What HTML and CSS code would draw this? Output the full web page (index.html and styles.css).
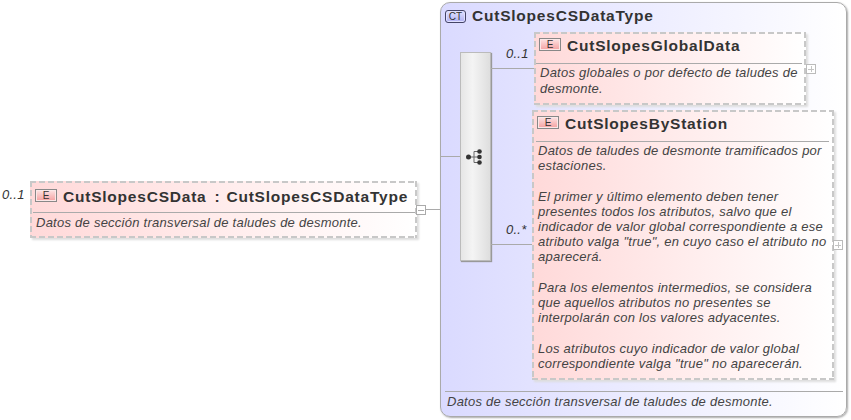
FILE: index.html
```html
<!DOCTYPE html>
<html lang="es">
<head>
<meta charset="utf-8">
<title>CutSlopesCSData</title>
<link rel="stylesheet" href="styles.css">
</head>
<body>
<div class="canvas">
  <span class="occ occ-root">0..1</span>
  <div class="el el-root">
    <div class="head"><span class="badge">E</span><span class="name">CutSlopesCSData<span class="sep">:</span>CutSlopesCSDataType</span></div>
    <p class="doc">Datos de sección transversal de taludes de desmonte.</p>
  </div>
  <span class="toggle toggle-root"></span>
  <div class="wire wire-root"></div>

  <div class="type">
    <div class="type-head"><span class="badge badge-ct">CT</span><span class="name">CutSlopesCSDataType</span></div>
    <p class="doc type-doc">Datos de sección transversal de taludes de desmonte.</p>
  </div>

  <div class="wire wire-in"></div>
  <div class="seq">
    <svg class="seq-icon" width="18" height="18" viewBox="0 0 18 18">
      <path d="M3 9H9M9 3.500V14.500M9 3.500H15M9 9H15M9 14.500H15" fill="none" stroke="#666" stroke-width="1"/>
      <circle cx="3.500" cy="9" r="2.500" fill="#333"/>
      <circle cx="14.500" cy="3.500" r="2.300" fill="#333"/>
      <circle cx="14.500" cy="9" r="2.300" fill="#333"/>
      <circle cx="14.500" cy="14.500" r="2.300" fill="#333"/>
    </svg>
  </div>
  <div class="wire wire-a"></div>
  <div class="wire wire-b"></div>
  <span class="occ occ-a">0..1</span>
  <span class="occ occ-b">0..*</span>

  <div class="el el-a">
    <div class="head"><span class="badge">E</span><span class="name">CutSlopesGlobalData</span></div>
    <p class="doc">Datos globales o por defecto de taludes de desmonte.</p>
  </div>
  <span class="toggle plus toggle-a"></span>

  <div class="el el-b">
    <div class="head"><span class="badge">E</span><span class="name">CutSlopesByStation</span></div>
    <p class="doc">Datos de taludes de desmonte tramificados por estaciones.</p>
    <p class="doc">El primer y último elemento deben tener presentes todos los atributos, salvo que el indicador de valor global correspondiente a ese atributo valga "true", en cuyo caso el atributo no aparecerá.</p>
    <p class="doc">Para los elementos intermedios, se considera que aquellos atributos no presentes se interpolarán con los valores adyacentes.</p>
    <p class="doc">Los atributos cuyo indicador de valor global correspondiente valga "true" no aparecerán.</p>
  </div>
  <span class="toggle plus toggle-b"></span>
</div>
</body>
</html>
```
FILE: styles.css
```css
html, body { margin: 0; padding: 0; background: #fff; }
.canvas {
  position: relative;
  width: 851px;
  height: 420px;
  overflow: hidden;
  font-family: "Liberation Sans", Arial, sans-serif;
  color: #333;
}
.el {
  position: absolute;
  box-sizing: border-box;
  background:
    repeating-linear-gradient(90deg, #c8c8c8 0 6px, transparent 6px 9px) top / 100% 2px no-repeat,
    repeating-linear-gradient(90deg, #c8c8c8 0 6px, transparent 6px 9px) bottom / 100% 2px no-repeat,
    repeating-linear-gradient(180deg, #c8c8c8 0 6px, transparent 6px 9px) left / 2px 100% no-repeat,
    repeating-linear-gradient(180deg, #c8c8c8 0 6px, transparent 6px 9px) right / 2px 100% no-repeat,
    linear-gradient(90deg, #ffd9d9 0%, #fff 100%);
  box-shadow: 2px 2px 2px #ddd;
}
.el-root { left: 30px; top: 181px; width: 387px; height: 57px; padding: 6px 2px 0 3px; }
.el-a { left: 534px; top: 32px; width: 272px; height: 73px; padding: 4px 4px 0 2px; }
.el-b { left: 532px; top: 110px; width: 302px; height: 270px; padding: 4px 5px 0 4px; }
.head {
  display: flex;
  align-items: center;
  gap: 6px;
  box-sizing: border-box;
  height: 28px;
  padding: 0 0 8px 0;
  border-bottom: 1px solid #aaa;
  margin-bottom: 2px;
}
.el-root .head { height: 26px; padding: 0 0 6px 2px; }
.el-a .head { padding-left: 3px; margin-bottom: 1px; }
.el-b .head { padding-left: 1px; margin-bottom: 1px; }
.badge {
  box-sizing: border-box;
  flex: none;
  width: 22px;
  height: 13px;
  margin-top: -3px;
  border: 1px solid #888;
  box-shadow: inset 0 0 0 1px #fbe8e8;
  background: linear-gradient(180deg, #fde4e4, #f5a0a0);
  font-size: 10px;
  line-height: 12px;
  text-align: center;
  color: #333;
}
.name {
  font-size: 15.500px;
  font-weight: 700;
  white-space: nowrap;
  letter-spacing: .78px;
}
.sep { margin: 0 6px 0 8px; }
.doc {
  margin: 0 0 15.200px;
  padding: 0 0 0 2px;
  font-size: 13px;
  letter-spacing: .25px;
  line-height: 15.200px;
  font-style: italic;
  color: #444;
}
.el-root .doc { padding-left: 3px; }
.el-a .doc { padding-left: 4px; line-height: 16px; }
.type {
  position: absolute;
  box-sizing: border-box;
  left: 440px;
  top: 2px;
  width: 407px;
  height: 415px;
  border: 1px solid #aaa;
  border-radius: 10px;
  background: linear-gradient(90deg, #dadaff 0%, #fff 100%);
  box-shadow: 1px 1px 2px #aaa;
  display: flex;
  flex-direction: column;
  justify-content: space-between;
}
.type-head {
  display: flex;
  align-items: center;
  gap: 6px;
  padding: 4px 0 0 4px;
}
.badge-ct {
  width: 21px;
  height: 13px;
  margin-top: 0;
  border-radius: 3px;
  border-color: #446;
  box-shadow: inset 0 0 0 1px #e0e0ff;
  background: linear-gradient(180deg, #e4e4ff, #b0b0f4);
  font-size: 10px;
  line-height: 11px;
}
.type-doc {
  margin: 0 3px 0 4px;
  padding: 0 0 0 2px;
  border-top: 1px solid #aaa;
  height: 25px;
  line-height: 19px;
  box-sizing: border-box;
}
.seq {
  position: absolute;
  box-sizing: border-box;
  left: 460px;
  top: 52px;
  width: 31px;
  height: 209px;
  border: 1px solid #bbb;
  background: linear-gradient(90deg, #e6e6e6, #f4f4f4 40%, #dedede);
  box-shadow: 1px 1px 1px #999;
}
.seq-icon { position: absolute; left: 4px; top: 95px; }
.wire { position: absolute; height: 1px; background: #aaa; }
.wire-root { left: 426px; top: 209px; width: 14px; }
.wire-in { left: 440px; top: 156px; width: 20px; }
.wire-a { left: 491px; top: 68px; width: 43px; }
.wire-b { left: 491px; top: 244px; width: 41px; }
.occ {
  position: absolute;
  font-size: 13px;
  letter-spacing: .25px;
  line-height: 15px;
  font-style: italic;
  color: #333;
}
.occ-root { left: 2px; top: 187px; }
.occ-a { left: 506px; top: 46px; }
.occ-b { left: 506px; top: 222px; }
.toggle {
  position: absolute;
  box-sizing: border-box;
  width: 10px;
  height: 10px;
  border: 1px solid #aaa;
  background: linear-gradient(#aaa, #aaa) center / 6px 1px no-repeat, #fff;
}
.plus {
  border-color: #bbb;
  background:
    linear-gradient(#c4c4c4, #c4c4c4) center / 6px 1px no-repeat,
    linear-gradient(#c4c4c4, #c4c4c4) center / 1px 6px no-repeat,
    #fff;
}
.toggle-root { left: 416px; top: 205px; }
.toggle-a { left: 806px; top: 64px; }
.toggle-b { left: 833px; top: 240px; }
```
